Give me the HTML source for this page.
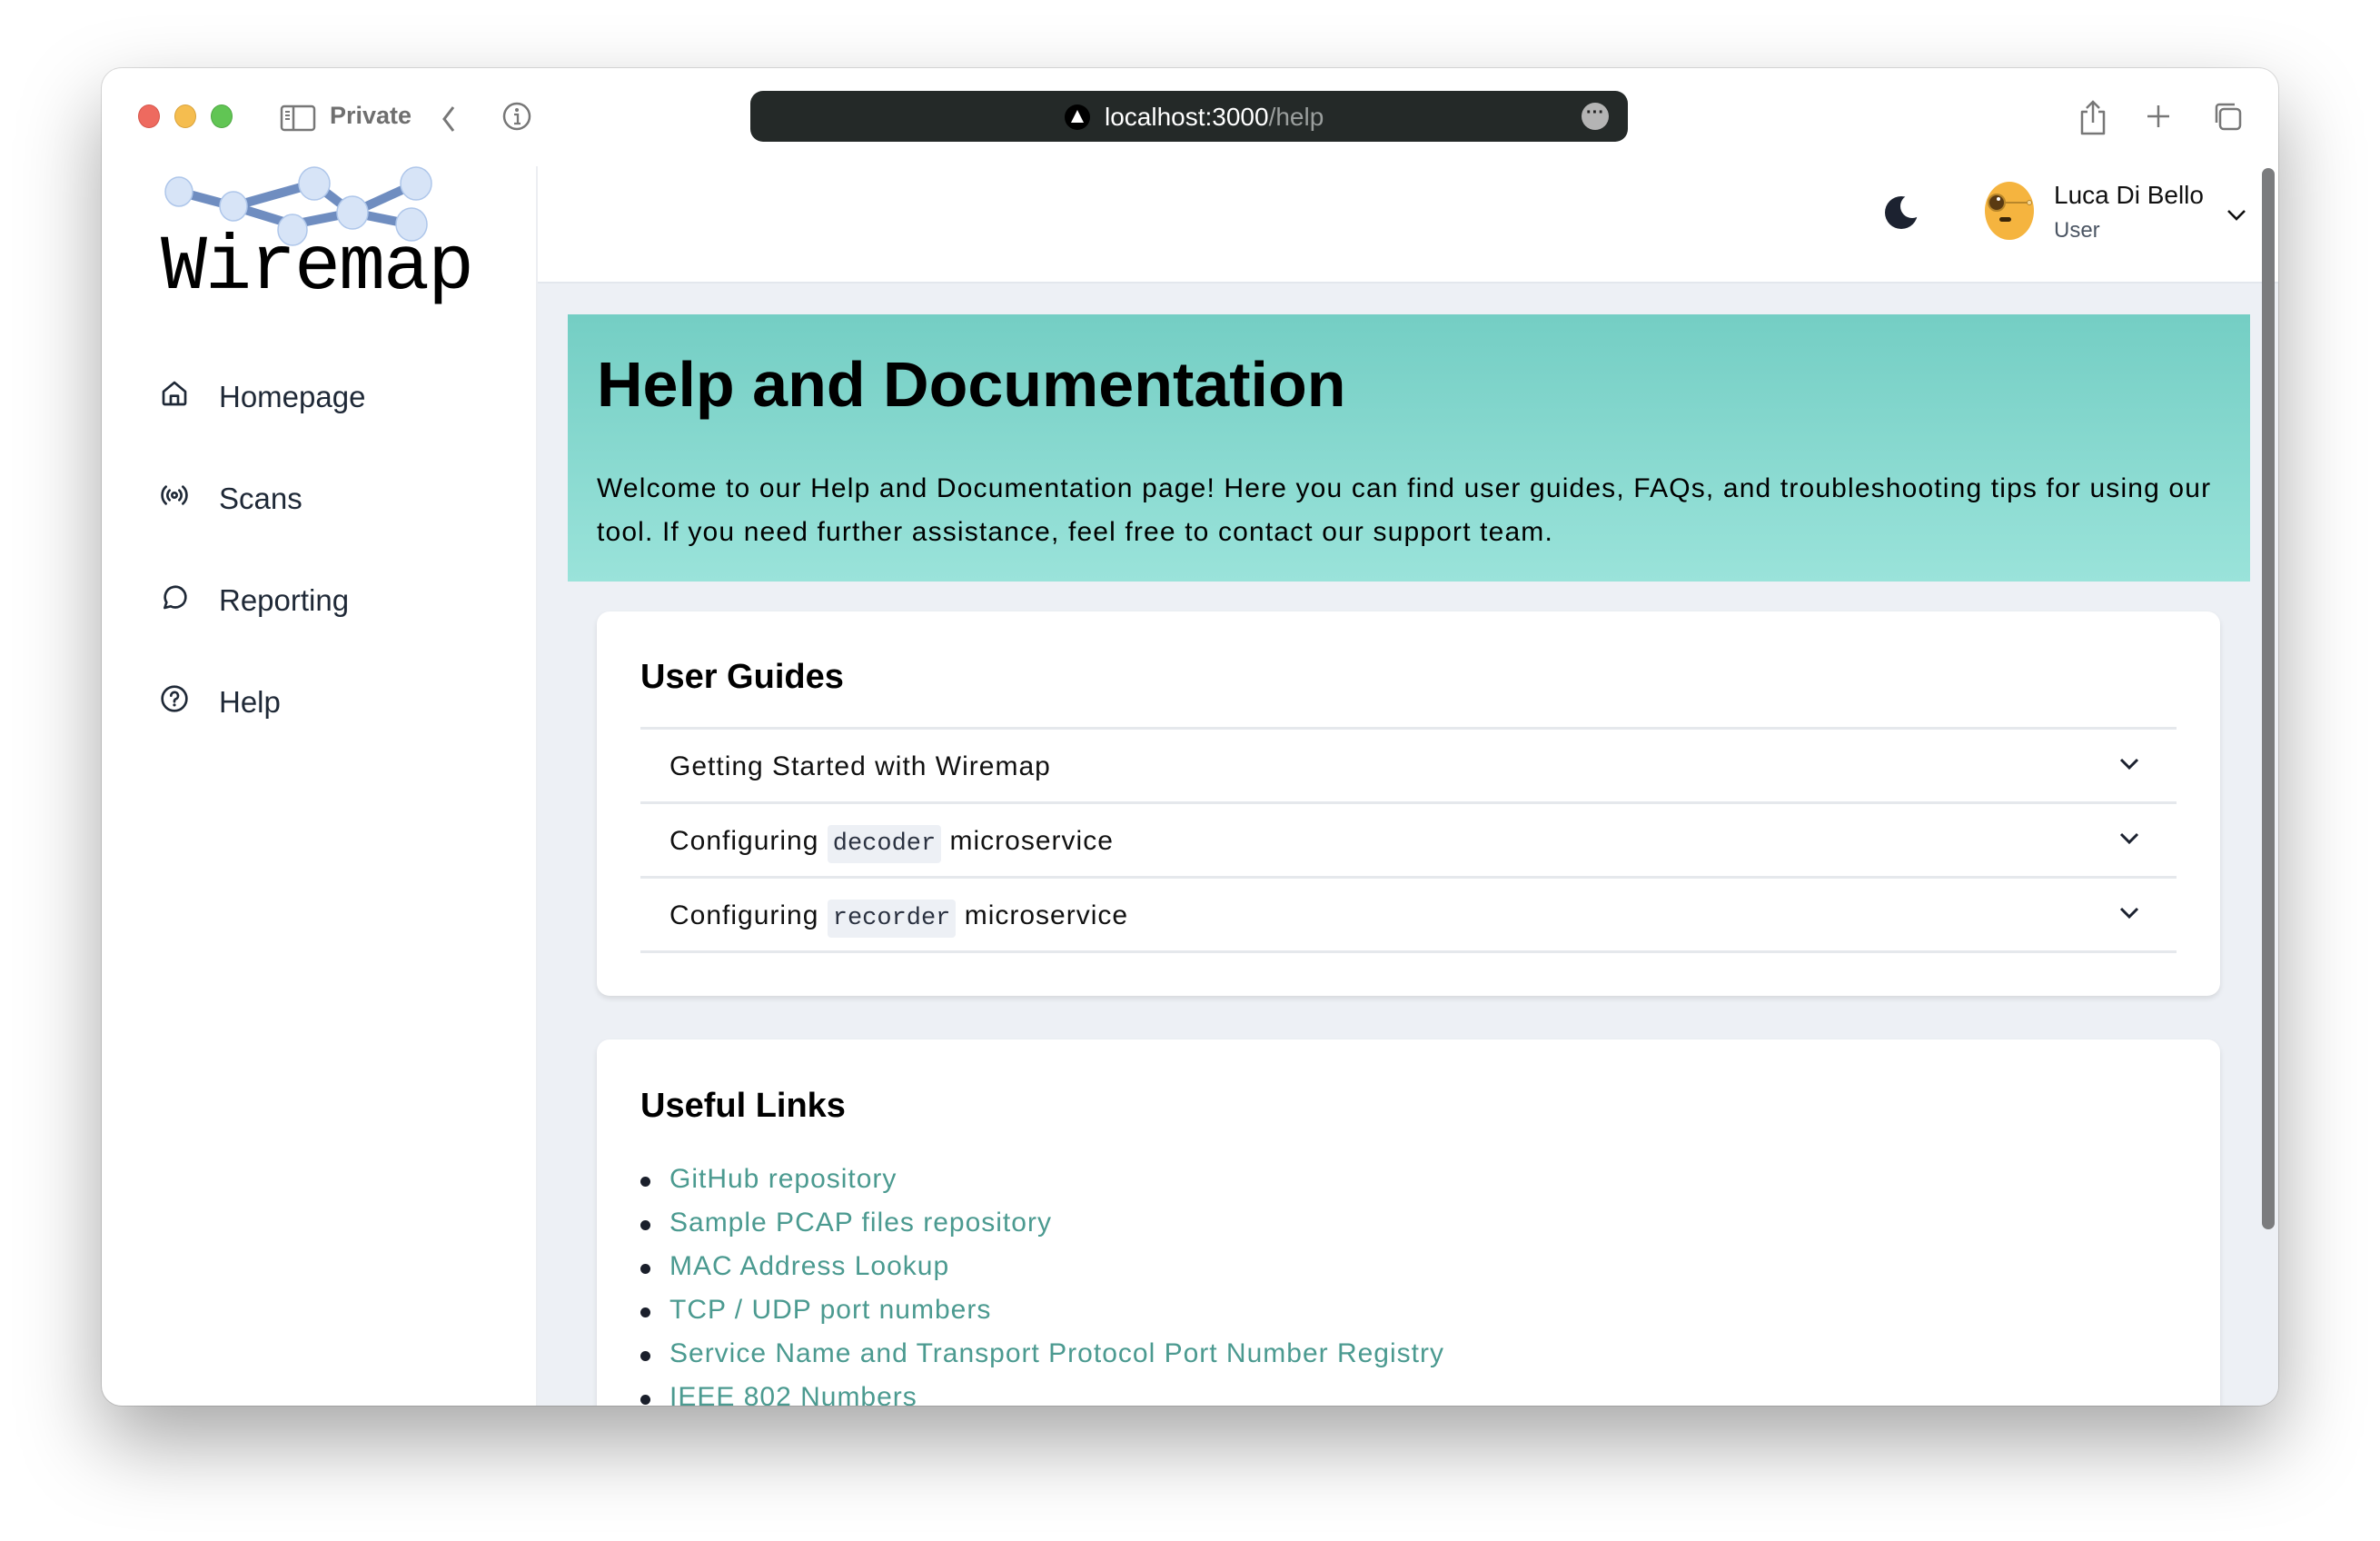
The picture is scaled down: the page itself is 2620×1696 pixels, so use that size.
<!DOCTYPE html>
<html><head><meta charset="utf-8"><style>
*{margin:0;padding:0;box-sizing:border-box}
body{width:2620px;height:1696px;background:#fff;position:relative;overflow:hidden;font-family:"Liberation Sans",sans-serif;color:#111}
.win{position:absolute;left:112px;top:75px;width:2396px;height:1472px;border-radius:22px;background:#fff;overflow:hidden;box-shadow:0 40px 90px rgba(0,0,0,.35),0 0 0 1px rgba(0,0,0,.12)}
.abs{position:absolute}
.dot{position:absolute;width:24px;height:26px;border-radius:50%;top:40px}
.nav{position:absolute;left:129px;font-size:33px;color:#1f2937}
.navi{position:absolute;left:64px}
.main{position:absolute;left:480px;top:237px;width:1916px;height:1235px;background:#edf0f5}
.card{position:absolute;background:#fff;border-radius:14px;box-shadow:0 3px 6px rgba(0,0,0,.1)}
.row{position:absolute;left:48px;font-size:30px;color:#111;letter-spacing:1px}
.div{position:absolute;left:0;width:1691px;height:3px;background:#e5e8ec}
code{font-family:"Liberation Mono",monospace;font-size:27px;background:#edf0f5;color:#2a3140;padding:6px 6px;border-radius:4px;letter-spacing:0}
.lk{position:absolute;left:80px;font-size:30px;color:#4b9a90;letter-spacing:1px}
.bl{position:absolute;left:-32px;top:14px;width:11px;height:11px;border-radius:50%;background:#1a1f2b}
</style></head><body>
<div class="win">
 <div class="dot" style="left:40px;background:#ee6a5f;border:1px solid #d5564b"></div>
 <div class="dot" style="left:80px;background:#f5bd4f;border:1px solid #d9a23a"></div>
 <div class="dot" style="left:120px;background:#61c554;border:1px solid #4ea843"></div>
 <svg class="abs" style="left:196px;top:40px" width="40" height="30" viewBox="0 0 40 30"><rect x="2" y="2" width="36" height="26" rx="3" fill="none" stroke="#777" stroke-width="2.5"/><line x1="15" y1="2" x2="15" y2="28" stroke="#777" stroke-width="2.5"/><path d="M6 8h5M6 12h5M6 16h5" stroke="#777" stroke-width="2"/></svg>
 <div class="abs" style="left:251px;top:37px;font-size:27px;font-weight:bold;color:#6f6f6f">Private</div>
 <svg class="abs" style="left:372px;top:40px" width="20" height="32" viewBox="0 0 20 32"><path d="M15 3L5 16l10 13" fill="none" stroke="#777" stroke-width="3"/></svg>
 <svg class="abs" style="left:440px;top:36px" width="34" height="34" viewBox="0 0 34 34"><circle cx="17" cy="17" r="14" fill="none" stroke="#777" stroke-width="2.5"/><circle cx="17" cy="10" r="2" fill="#777"/><path d="M14 15h4v10M14 25h7" stroke="#777" stroke-width="2.3" fill="none"/></svg>
 <div class="abs" style="left:714px;top:25px;width:966px;height:56px;border-radius:14px;background:#242928"></div>
 <div class="abs" style="left:1060px;top:40px;width:28px;height:28px;border-radius:50%;background:#000"></div>
 <svg class="abs" style="left:1066px;top:44px" width="16" height="18"><path d="M8 2L15 16H1z" fill="#fff"/></svg>
 <div class="abs" style="left:1104px;top:38px;font-size:28px;color:#fff">localhost:3000<span style="color:#9a9e9d">/help</span></div>
 <div class="abs" style="left:1629px;top:38px;width:30px;height:30px;border-radius:50%;background:#b4b4b4;color:#222;font-size:20px;line-height:22px;text-align:center;font-weight:bold">···</div>
 <svg class="abs" style="left:2176px;top:34px" width="32" height="40" viewBox="0 0 32 40"><path d="M10 14H4v24h24V14h-6" fill="none" stroke="#777" stroke-width="2.5" stroke-linejoin="round"/><path d="M16 26V3M9 10l7-7 7 7" fill="none" stroke="#777" stroke-width="2.5"/></svg>
 <svg class="abs" style="left:2250px;top:39px" width="28" height="28"><path d="M14 2v24M2 14h24" stroke="#777" stroke-width="2.5"/></svg>
 <svg class="abs" style="left:2323px;top:36px" width="34" height="34" viewBox="0 0 34 34"><rect x="9" y="9" width="22" height="22" rx="4" fill="#fff" stroke="#777" stroke-width="2.5"/><path d="M5 24V7a3 3 0 0 1 3-3h17" fill="none" stroke="#777" stroke-width="2.5"/></svg>

 <div class="abs" style="left:478px;top:108px;width:2px;height:1364px;background:#eceef2"></div>
 <svg class="abs" style="left:0;top:0" width="480" height="300">
  <g stroke="#6f8dc0" stroke-width="10" stroke-linecap="round">
   <line x1="85" y1="136" x2="145" y2="152"/><line x1="145" y1="152" x2="234" y2="127"/><line x1="145" y1="152" x2="210" y2="172"/><line x1="234" y1="127" x2="276" y2="159"/><line x1="210" y1="172" x2="276" y2="159"/><line x1="276" y1="159" x2="346" y2="127"/><line x1="276" y1="159" x2="341" y2="172"/>
  </g>
  <g fill="#d7e4f7" stroke="#aec6ea" stroke-width="1.5">
   <ellipse cx="85" cy="136" rx="15" ry="16"/><ellipse cx="145" cy="152" rx="15" ry="16"/><ellipse cx="234" cy="127" rx="17" ry="18"/><ellipse cx="210" cy="178" rx="16" ry="17"/><ellipse cx="276" cy="159" rx="17" ry="18"/><ellipse cx="346" cy="127" rx="17" ry="18"/><ellipse cx="341" cy="172" rx="17" ry="18"/>
  </g>
 </svg>
 <div class="abs" style="left:65px;top:170px;font-family:'Liberation Mono',monospace;font-size:85px;color:#000;letter-spacing:-2px;line-height:100px">Wiremap</div>

 <svg class="navi" style="top:342px" width="32" height="32" viewBox="0 0 24 24"><path d="M3 10.5L12 3l9 7.5V20a1 1 0 0 1-1 1H4a1 1 0 0 1-1-1z M9 21v-7h6v7" fill="none" stroke="#1f2937" stroke-width="2" stroke-linejoin="round"/></svg>
 <div class="nav" style="top:343px">Homepage</div>
 <svg class="navi" style="top:454px" width="32" height="32" viewBox="0 0 24 24"><circle cx="12" cy="12" r="2" fill="none" stroke="#1f2937" stroke-width="2"/><path d="M8 8a5.5 5.5 0 0 0 0 8M16 8a5.5 5.5 0 0 1 0 8M5 5a9.5 9.5 0 0 0 0 14M19 5a9.5 9.5 0 0 1 0 14" fill="none" stroke="#1f2937" stroke-width="2" stroke-linecap="round"/></svg>
 <div class="nav" style="top:455px">Scans</div>
 <svg class="navi" style="top:566px" width="32" height="32" viewBox="0 0 24 24"><path d="M4 21l1.5-4.5A8.5 8.5 0 1 1 9 19.7z" fill="none" stroke="#1f2937" stroke-width="2" stroke-linejoin="round"/></svg>
 <div class="nav" style="top:567px">Reporting</div>
 <svg class="navi" style="top:678px" width="32" height="32" viewBox="0 0 24 24"><circle cx="12" cy="12" r="10" fill="none" stroke="#1f2937" stroke-width="2"/><path d="M9.2 9.5a2.9 2.9 0 1 1 3.8 2.8c-.6.3-1 .8-1 1.5v.6" fill="none" stroke="#1f2937" stroke-width="2" stroke-linecap="round"/><circle cx="12" cy="17.2" r="1.2" fill="#1f2937"/></svg>
 <div class="nav" style="top:679px">Help</div>

 <div class="abs" style="left:480px;top:235px;width:1916px;height:2px;background:#e3e7ed"></div>
 <svg class="abs" style="left:1963px;top:140px" width="36" height="38" viewBox="0 0 36 38"><defs><mask id="m"><rect width="36" height="38" fill="#fff"/><circle cx="30" cy="12" r="13" fill="#000"/></mask></defs><circle cx="18" cy="19" r="18" fill="#1c2230" mask="url(#m)"/></svg>
 <svg class="abs" style="left:2068px;top:124px" width="68" height="68" viewBox="0 0 68 68"><ellipse cx="32" cy="33" rx="27" ry="32" fill="#f5b43f"/><line x1="20" y1="24" x2="54" y2="24" stroke="#b8862a" stroke-width="2"/><circle cx="54" cy="24" r="2.5" fill="#f5d89a" stroke="#b8862a"/><circle cx="18" cy="24" r="9" fill="#5a3a12" stroke="#b8862a" stroke-width="2"/><circle cx="20" cy="20" r="2" fill="#fff"/><rect x="21" y="40" width="13" height="5" rx="2.5" fill="#3a2508"/></svg>
 <div class="abs" style="left:2149px;top:124px;font-size:28px;color:#111">Luca Di Bello</div>
 <div class="abs" style="left:2149px;top:165px;font-size:24px;color:#4b5563">User</div>
 <svg class="abs" style="left:2338px;top:154px" width="24" height="16"><path d="M3 3l9 9 9-9" fill="none" stroke="#111" stroke-width="2.6"/></svg>

 <div class="main">
  <div class="abs" style="left:33px;top:34px;width:1852px;height:294px;background:linear-gradient(#74cec4,#9ae3da)">
   <div class="abs" style="left:32px;top:37px;font-size:70px;font-weight:bold;color:#000;letter-spacing:0">Help and Documentation</div>
   <div class="abs" style="left:32px;top:168px;font-size:30px;line-height:48px;color:#000;width:1830px;letter-spacing:1.15px;white-space:nowrap">Welcome to our Help and Documentation page! Here you can find user guides, FAQs, and troubleshooting tips for using our<br>tool. If you need further assistance, feel free to contact our support team.</div>
  </div>
  <div class="card" style="left:65px;top:361px;width:1787px;height:423px">
   <div class="abs" style="left:48px;top:51px;font-size:38px;font-weight:bold;color:#000">User Guides</div>
   <div style="position:absolute;left:48px;top:0;width:1691px;height:423px">
    <div class="div" style="top:127px"></div><div class="div" style="top:209px"></div><div class="div" style="top:291px"></div><div class="div" style="top:373px"></div>
   </div>
   <div class="row" style="left:80px;top:154px">Getting Started with Wiremap</div>
   <div class="row" style="left:80px;top:236px">Configuring <code>decoder</code> microservice</div>
   <div class="row" style="left:80px;top:318px">Configuring <code>recorder</code> microservice</div>
   <svg class="abs" style="left:1675px;top:160px" width="24" height="16"><path d="M3 3l9 9 9-9" fill="none" stroke="#1c2230" stroke-width="3"/></svg>
   <svg class="abs" style="left:1675px;top:242px" width="24" height="16"><path d="M3 3l9 9 9-9" fill="none" stroke="#1c2230" stroke-width="3"/></svg>
   <svg class="abs" style="left:1675px;top:324px" width="24" height="16"><path d="M3 3l9 9 9-9" fill="none" stroke="#1c2230" stroke-width="3"/></svg>
  </div>
  <div class="card" style="left:65px;top:832px;width:1787px;height:500px">
   <div class="abs" style="left:48px;top:52px;font-size:38px;font-weight:bold;color:#000">Useful Links</div>
   <div class="lk" style="top:137px"><span class="bl"></span>GitHub repository</div>
   <div class="lk" style="top:185px"><span class="bl"></span>Sample PCAP files repository</div>
   <div class="lk" style="top:233px"><span class="bl"></span>MAC Address Lookup</div>
   <div class="lk" style="top:281px"><span class="bl"></span>TCP / UDP port numbers</div>
   <div class="lk" style="top:329px"><span class="bl"></span>Service Name and Transport Protocol Port Number Registry</div>
   <div class="lk" style="top:377px"><span class="bl"></span>IEEE 802 Numbers</div>
  </div>
 </div>
 <div class="abs" style="left:2378px;top:110px;width:14px;height:1168px;border-radius:7px;background:#7b7c7e"></div>
</div>
</body></html>
